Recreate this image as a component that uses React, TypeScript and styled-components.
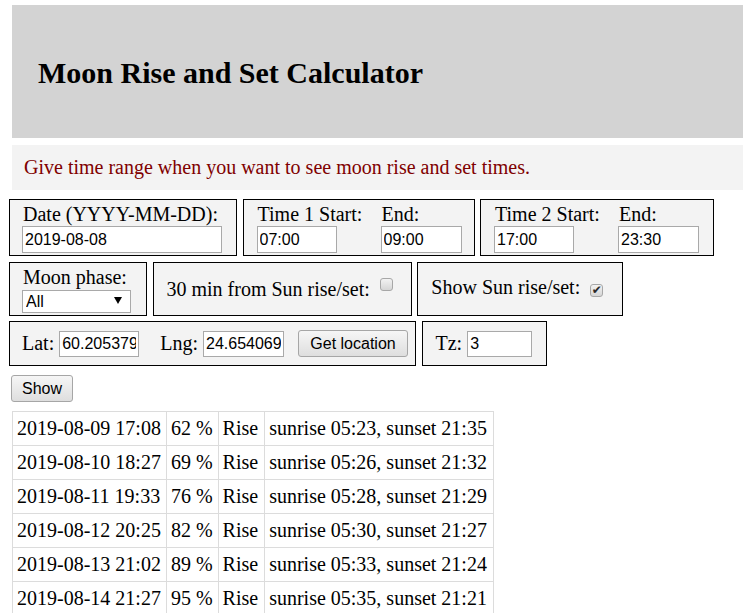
import React from 'react';
import styled, { createGlobalStyle } from 'styled-components';

const GlobalStyle = createGlobalStyle`
  html, body {
    margin: 0;
    padding: 0;
    overflow: hidden;
    background: #fff;
  }
  body {
    font-family: "Liberation Serif", "Times New Roman", serif;
    font-size: 20px;
    color: #000;
  }
`;

interface IRow {
  when: string;
  phase: number;
  kind: string;
  sunrise: string;
  sunset: string;
}

const rows: IRow[] = [
  { when: '2019-08-09 17:08', phase: 62, kind: 'Rise', sunrise: '05:23', sunset: '21:35' },
  { when: '2019-08-10 18:27', phase: 69, kind: 'Rise', sunrise: '05:26', sunset: '21:32' },
  { when: '2019-08-11 19:33', phase: 76, kind: 'Rise', sunrise: '05:28', sunset: '21:29' },
  { when: '2019-08-12 20:25', phase: 82, kind: 'Rise', sunrise: '05:30', sunset: '21:27' },
  { when: '2019-08-13 21:02', phase: 89, kind: 'Rise', sunrise: '05:33', sunset: '21:24' },
  { when: '2019-08-14 21:27', phase: 95, kind: 'Rise', sunrise: '05:35', sunset: '21:21' },
];

const App: React.FC = () => {
  return (
    <>
      <GlobalStyle />
      <Page>
        <Banner>
          <Title>Moon Rise and Set Calculator</Title>
        </Banner>
        <Notice>Give time range when you want to see moon rise and set times.</Notice>

        <Form onSubmit={(e) => e.preventDefault()}>
          <Row>
            <Group>
              <Field>
                Date (YYYY-MM-DD):
                <TextInput $w={200} defaultValue="2019-08-08" />
              </Field>
            </Group>
            <Group $padRight={12} $padLeft={14}>
              <Field $w={124}>
                Time 1 Start:
                <TextInput $w={80} defaultValue="07:00" />
              </Field>
              <Field>
                End:
                <TextInput $w={81} defaultValue="09:00" />
              </Field>
            </Group>
            <Group $padRight={14} $padLeft={14}>
              <Field $w={124}>
                Time 2 Start:
                <TextInput $w={80} defaultValue="17:00" />
              </Field>
              <Field>
                End:
                <TextInput $w={81} defaultValue="23:30" />
              </Field>
            </Group>
          </Row>

          <Row>
            <Group $padRight={15}>
              <Field>
                Moon phase:
                <SelectWrap>
                  <Select defaultValue="all">
                    <option value="all">All</option>
                    <option value="waxing">Waxing</option>
                    <option value="waning">Waning</option>
                  </Select>
                  <Arrow />
                </SelectWrap>
              </Field>
            </Group>
            <Group $inline $padRight={18}>
              <span>
                30 min from Sun rise/set:
                <Check />
              </span>
            </Group>
            <Group $inline $padRight={19}>
              <span>
                Show Sun rise/set:
                <Check $checked>✔</Check>
              </span>
            </Group>
          </Row>

          <Row>
            <Group $inline $padY={8} $padRight={7}>
              Lat:
              <TextInput $w={80} $h={26} $ml={5} defaultValue="60.2053796" />
              <Spacer $w={21} />
              Lng:
              <TextInput $w={81} $h={26} $ml={5} defaultValue="24.6540693" />
              <Button type="button" $w={110} $ml={14}>
                Get location
              </Button>
            </Group>
            <Group $inline $padY={8} $padRight={14} $padLeft={13}>
              Tz:
              <TextInput $w={65} $h={26} $ml={5} defaultValue="3" />
            </Group>
          </Row>
        </Form>

        <Button type="button" $w={62} $ml={2} $mt={9}>
          Show
        </Button>

        <Results>
          <tbody>
            {rows.map((r) => (
              <tr key={r.when}>
                <Cell>{r.when}</Cell>
                <Cell>{r.phase} %</Cell>
                <Cell $padRight={6}>{r.kind}</Cell>
                <Cell $padRight={6}>
                  sunrise {r.sunrise}, sunset {r.sunset}
                </Cell>
              </tr>
            ))}
          </tbody>
        </Results>
      </Page>
    </>
  );
};

const Page = styled.div`
  padding: 5px 0 0 9px;
`;

const Banner = styled.header`
  box-sizing: border-box;
  margin-left: 3px;
  height: 133px;
  padding: 2px 0 0 26px;
  display: flex;
  align-items: center;
  background: #d3d3d3;
`;

const Title = styled.h1`
  margin: 0;
  font-size: 30px;
  font-weight: bold;
`;

const Notice = styled.p`
  box-sizing: border-box;
  margin: 7px 0 0 3px;
  height: 45px;
  padding-left: 12px;
  display: flex;
  align-items: center;
  background: #f3f3f3;
  color: #800000;
`;

const Form = styled.form`
  margin-top: 9px;
  display: flex;
  flex-direction: column;
  gap: 5.5px;
`;

const Row = styled.div`
  display: flex;
  align-items: stretch;
  gap: 5.5px;
`;

const Group = styled.div<{
  $inline?: boolean;
  $padY?: number;
  $padRight?: number;
  $padLeft?: number;
}>`
  border: 1px solid #000;
  background: #f3f3f3;
  display: flex;
  align-items: ${(p) => (p.$inline ? 'center' : 'flex-start')};
  padding: ${(p) =>
    p.$padY !== undefined
      ? `${p.$padY}px ${p.$padRight ?? 13}px ${p.$padY}px ${p.$padLeft ?? 12}px`
      : `3px ${p.$padRight ?? 14}px 2px ${p.$padLeft ?? 13}px`};
  line-height: 23px;
  white-space: nowrap;
`;

const Field = styled.label<{ $w?: number }>`
  display: flex;
  flex-direction: column;
  align-items: flex-start;
  width: ${(p) => (p.$w ? `${p.$w}px` : 'auto')};
`;

const TextInput = styled.input<{ $w: number; $h?: number; $ml?: number }>`
  box-sizing: border-box;
  width: ${(p) => p.$w}px;
  height: ${(p) => p.$h ?? 27}px;
  margin: 0 0 0 ${(p) => (p.$ml ? `${p.$ml}px` : '-1px')};
  padding: 1px 2px;
  border: 1px solid #a9a9a9;
  background: #fff;
  color: #000;
  font: 16px "Liberation Sans", Arial, sans-serif;
  outline: none;
`;

const SelectWrap = styled.span`
  position: relative;
  display: inline-block;
  margin-left: -1px;
`;

const Select = styled.select`
  appearance: none;
  box-sizing: border-box;
  width: 109px;
  height: 23px;
  margin: 0;
  padding: 0 0 0 3px;
  border: 1px solid #a9a9a9;
  border-radius: 0;
  background: #fff;
  color: #000;
  font: 16px "Liberation Sans", Arial, sans-serif;
`;

const Arrow = styled.span`
  position: absolute;
  right: 9px;
  top: 8px;
  width: 0;
  height: 0;
  border-left: 4px solid transparent;
  border-right: 4px solid transparent;
  border-top: 7px solid #000;
  pointer-events: none;
`;

const Check = styled.span<{ $checked?: boolean }>`
  box-sizing: border-box;
  display: inline-flex;
  align-items: center;
  justify-content: center;
  width: 13px;
  height: 13px;
  margin: 0 0 5px 10px;
  vertical-align: baseline;
  border: 1px solid #a7a7a7;
  border-radius: 3px;
  background: linear-gradient(#f2f2f2, #d6d6d6);
  color: #2a2a2a;
  font: bold 12px/1 "DejaVu Sans", sans-serif;
  overflow: hidden;
`;

const Spacer = styled.span<{ $w: number }>`
  display: inline-block;
  width: ${(p) => p.$w}px;
`;

const Button = styled.button<{ $w: number; $ml?: number; $mt?: number }>`
  box-sizing: border-box;
  display: block;
  width: ${(p) => p.$w}px;
  height: 27px;
  margin: ${(p) => p.$mt ?? 0}px 0 0 ${(p) => p.$ml ?? 0}px;
  padding: 0;
  border: 1px solid #a6a6a6;
  border-radius: 3px;
  background: linear-gradient(#f6f6f6, #dedede);
  color: #000;
  font: 16px "Liberation Sans", Arial, sans-serif;
`;

const Results = styled.table`
  margin: 9px 0 0 3px;
  border-collapse: collapse;
  border: 1px solid #dcdcdc;
`;

const Cell = styled.td<{ $padRight?: number }>`
  padding: 5px ${(p) => p.$padRight ?? 5}px 5px 4px;
  border: 1px solid #dcdcdc;
  line-height: 23px;
  white-space: nowrap;
`;

export default App;
